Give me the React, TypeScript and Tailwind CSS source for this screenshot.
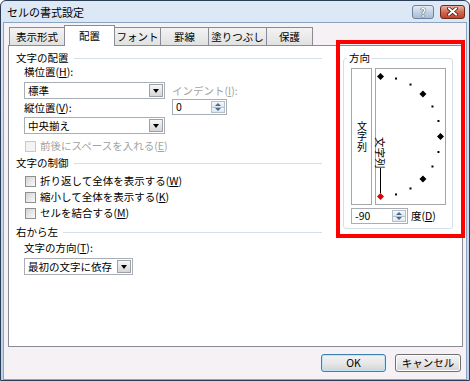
import type { ReactNode } from 'react'

const U = ({ children }: { children: ReactNode }) => (
  <span className="underline underline-offset-[1px]">{children}</span>
)

function Section({ title }: { title: string }) {
  return (
    <div className="flex h-[12px] items-center">
      <span>{title}</span>
      <span className="ml-[5px] h-px flex-1 bg-[#d5dfe6]" />
    </div>
  )
}

function Combo({ value, width }: { value: string; width: string }) {
  return (
    <div className={`flex h-[17px] items-center border border-[#a9aeb5] bg-white ${width}`}>
      <span className="flex-1 pl-[3px]">{value}</span>
      <span className="mr-px flex h-[13px] w-[14px] items-center justify-center border border-[#9aa1aa] bg-gradient-to-b from-[#f7f7f7] to-[#d6d6d6]">
        <span className="h-0 w-0 border-x-[3px] border-t-[4px] border-x-transparent border-t-black" />
      </span>
    </div>
  )
}

function Spin({ value, width }: { value: string; width: string }) {
  return (
    <div className={`flex h-[16px] items-stretch border border-[#a9aeb5] bg-white ${width}`}>
      <span className="flex flex-1 items-center pl-[3px]">{value}</span>
      <span className="my-px mr-px flex w-[14px] flex-col border border-[#b4bfcc]">
        <span className="flex flex-1 items-center justify-center border-b border-[#b4bfcc] bg-gradient-to-b from-[#f6f9fc] to-[#dce6f1]">
          <span className="h-0 w-0 border-x-[3px] border-b-[3px] border-x-transparent border-b-[#4d6a8e]" />
        </span>
        <span className="flex flex-1 items-center justify-center bg-gradient-to-b from-[#f6f9fc] to-[#dce6f1]">
          <span className="h-0 w-0 border-x-[3px] border-t-[3px] border-x-transparent border-t-[#4d6a8e]" />
        </span>
      </span>
    </div>
  )
}

function Check({ children, disabled }: { children: ReactNode; disabled?: boolean }) {
  return (
    <div className="flex h-[16px] items-center pl-[9px]">
      <span
        className={
          disabled
            ? 'h-[11px] w-[11px] border border-[#c9c9c9] bg-[#f3f3f3]'
            : 'h-[11px] w-[11px] border border-[#8e8f8f] bg-gradient-to-br from-[#d4d4d4] to-[#f9f9f9]'
        }
      />
      <span className={disabled ? 'ml-[4px] text-[#a3a3a3]' : 'ml-[4px]'}>{children}</span>
    </div>
  )
}

const tabs = [
  { label: '表示形式', w: 'w-[56px]' },
  { label: '配置', w: 'w-[51px]', active: true },
  { label: 'フォント', w: 'w-[47px]' },
  { label: '罫線', w: 'w-[49px]' },
  { label: '塗りつぶし', w: 'w-[59px]' },
  { label: '保護', w: 'w-[47px]' },
]

// 15° steps around the half dial, centre sits on the box's left edge
const dialPoints = Array.from({ length: 13 }, (_, i) => {
  const deg = 90 - i * 15
  const rad = (deg * Math.PI) / 180
  return { deg, x: 4.5 + 60 * Math.cos(rad), y: 67.5 - 60 * Math.sin(rad) }
})

function Dial() {
  return (
    <div className="relative h-[137px] w-[71px] border border-[#a6a6a6] bg-white">
      <svg className="absolute inset-0" width="69" height="135" viewBox="0 0 69 135">
        {dialPoints.map((p) =>
          p.deg % 45 === 0 ? (
            <polygon
              key={p.deg}
              points={`${p.x},${p.y - 3.5} ${p.x + 3.5},${p.y} ${p.x},${p.y + 3.5} ${p.x - 3.5},${p.y}`}
              fill={p.deg === -90 ? '#e00000' : '#000'}
            />
          ) : (
            <rect key={p.deg} x={p.x - 1} y={p.y - 1} width="2" height="2" fill="#000" />
          )
        )}
        <line x1="4.5" y1="99" x2="4.5" y2="124" stroke="#000" strokeWidth="1" />
      </svg>
      <span className="absolute left-[10px] top-[68px] origin-top-left rotate-90 whitespace-nowrap leading-[11px]">
        文字列
      </span>
    </div>
  )
}

export default function App() {
  return (
    <div className="relative flex h-[381px] w-[470px] flex-col overflow-hidden rounded-t-[6px] border border-[#2c3e55] bg-gradient-to-b from-[#dde9f6] via-[#c6d8ed] to-[#bdd2ea] font-['Noto_Sans_CJK_JP',sans-serif] text-[10.5px] leading-[12px] text-black">
      {/* title bar */}
      <div className="flex h-[21px] items-center pl-[6px] pr-[4px]">
        <span className="text-[11px]">セルの書式設定</span>
        <div className="ml-auto flex items-center gap-[6px]">
          <span className="flex h-[14px] w-[22px] items-center justify-center rounded-[3px] border border-[#6f8199] bg-gradient-to-b from-[#e3ecf6] via-[#c2d2e5] to-[#a9bdd6] text-[11px] font-bold text-white [text-shadow:0_0_1px_#233,0_0_1px_#233]">
            ?
          </span>
          <span className="flex h-[14px] w-[25px] items-center justify-center rounded-[3px] border border-[#6b2a1c] bg-gradient-to-b from-[#eab2a4] via-[#d16a52] to-[#c0402a]">
            <svg width="11" height="9" viewBox="0 0 11 9">
              <path d="M2 1.5 L9 7.5 M9 1.5 L2 7.5" stroke="#4a1a10" strokeWidth="3.6" strokeLinecap="square" />
              <path d="M2 1.5 L9 7.5 M9 1.5 L2 7.5" stroke="#fff" strokeWidth="2" strokeLinecap="square" />
            </svg>
          </span>
        </div>
      </div>

      {/* client area */}
      <div className="mx-[2px] flex flex-1 flex-col border border-[#8aa4c2] bg-[#f5f1f5]">
        <div className="flex h-[22px] items-end pl-[6px]">
          {tabs.map((t) =>
            t.active ? (
              <div
                key={t.label}
                className={`relative z-10 -mb-px -ml-px flex h-[21px] items-center justify-center border border-b-0 border-[#898c95] bg-white ${t.w}`}
              >
                {t.label}
              </div>
            ) : (
              <div
                key={t.label}
                className={`-ml-px flex h-[18px] items-center justify-center border border-b-0 border-[#898c95] bg-gradient-to-b from-[#f3f3f3] to-[#e1e1e1] ${t.w}`}
              >
                {t.label}
              </div>
            )
          )}
        </div>

        <div className="ml-[4px] flex h-[302px] w-[455px] border border-[#898c95] bg-white pl-[7px]">
          {/* left column */}
          <div className="flex w-[306px] flex-col pt-[6px]">
            <Section title="文字の配置" />
            <div className="mt-[2px] h-[12px] pl-[8px]">
              横位置(<U>H</U>):
            </div>
            <div className="mt-[4px] flex pl-[8px]">
              <div className="flex flex-col">
                <Combo value="標準" width="w-[141px]" />
                <div className="mt-[3px] h-[12px]">
                  縦位置(<U>V</U>):
                </div>
                <div className="mt-[3px]">
                  <Combo value="中央揃え" width="w-[141px]" />
                </div>
              </div>
              <div className="ml-[7px] flex flex-col pt-[3px]">
                <div className="h-[12px] text-[#a3a3a3]">
                  インデント(<U>I</U>):
                </div>
                <div className="mt-[2px]">
                  <Spin value="0" width="w-[55px]" />
                </div>
              </div>
            </div>
            <div className="mt-[4px]">
              <Check disabled>
                前後にスペースを入れる(<U>E</U>)
              </Check>
            </div>

            <div className="mt-[3px]">
              <Section title="文字の制御" />
            </div>
            <div className="mt-[4px] flex flex-col">
              <Check>
                折り返して全体を表示する(<U>W</U>)
              </Check>
              <Check>
                縮小して全体を表示する(<U>K</U>)
              </Check>
              <Check>
                セルを結合する(<U>M</U>)
              </Check>
            </div>

            <div className="mt-[5px]">
              <Section title="右から左" />
            </div>
            <div className="mt-[4px] h-[12px] pl-[8px]">
              文字の方向(<U>T</U>):
            </div>
            <div className="mt-[4px] pl-[8px]">
              <Combo value="最初の文字に依存" width="w-[109px]" />
            </div>
          </div>

          {/* orientation group */}
          <div className="ml-[21px] pt-[12px]">
            <div className="relative flex h-[171px] w-[110px] flex-col rounded-[3px] border border-[#d5dfe6] pl-[7px] pt-[9px]">
              <span className="absolute -top-[7px] left-[3px] bg-white px-[2px]">方向</span>
              <div className="flex gap-[3px]">
                <div className="flex h-[137px] w-[21px] items-center justify-center border border-[#a6a6a6] bg-white">
                  <span className="text-[10px] leading-[12px] tracking-[0.5px] [writing-mode:vertical-rl]">文字列</span>
                </div>
                <Dial />
              </div>
              <div className="mt-[3px] flex items-center">
                <Spin value="-90" width="w-[57px]" />
                <span className="ml-[3px]">
                  度(<U>D</U>)
                </span>
              </div>
            </div>
          </div>
        </div>

        <div className="mt-[7px] flex justify-end gap-[9px] pr-[5px]">
          <button className="flex h-[18px] w-[65px] items-center justify-center rounded-[3px] border border-[#3c7fb1] bg-gradient-to-b from-[#f4f4f4] via-[#e8e8e8] to-[#d3d3d3] shadow-[inset_0_0_0_1px_#bfe4f8]">
            OK
          </button>
          <button className="flex h-[18px] w-[66px] items-center justify-center rounded-[3px] border border-[#707070] bg-gradient-to-b from-[#f4f4f4] via-[#e8e8e8] to-[#d3d3d3] shadow-[inset_0_0_0_1px_#fcfcfc]">
            キャンセル
          </button>
        </div>
      </div>

      {/* red annotation frame */}
      <div className="pointer-events-none absolute left-[335px] top-[39px] h-[198px] w-[129px] border-4 border-[#ff0000]" />
    </div>
  )
}
